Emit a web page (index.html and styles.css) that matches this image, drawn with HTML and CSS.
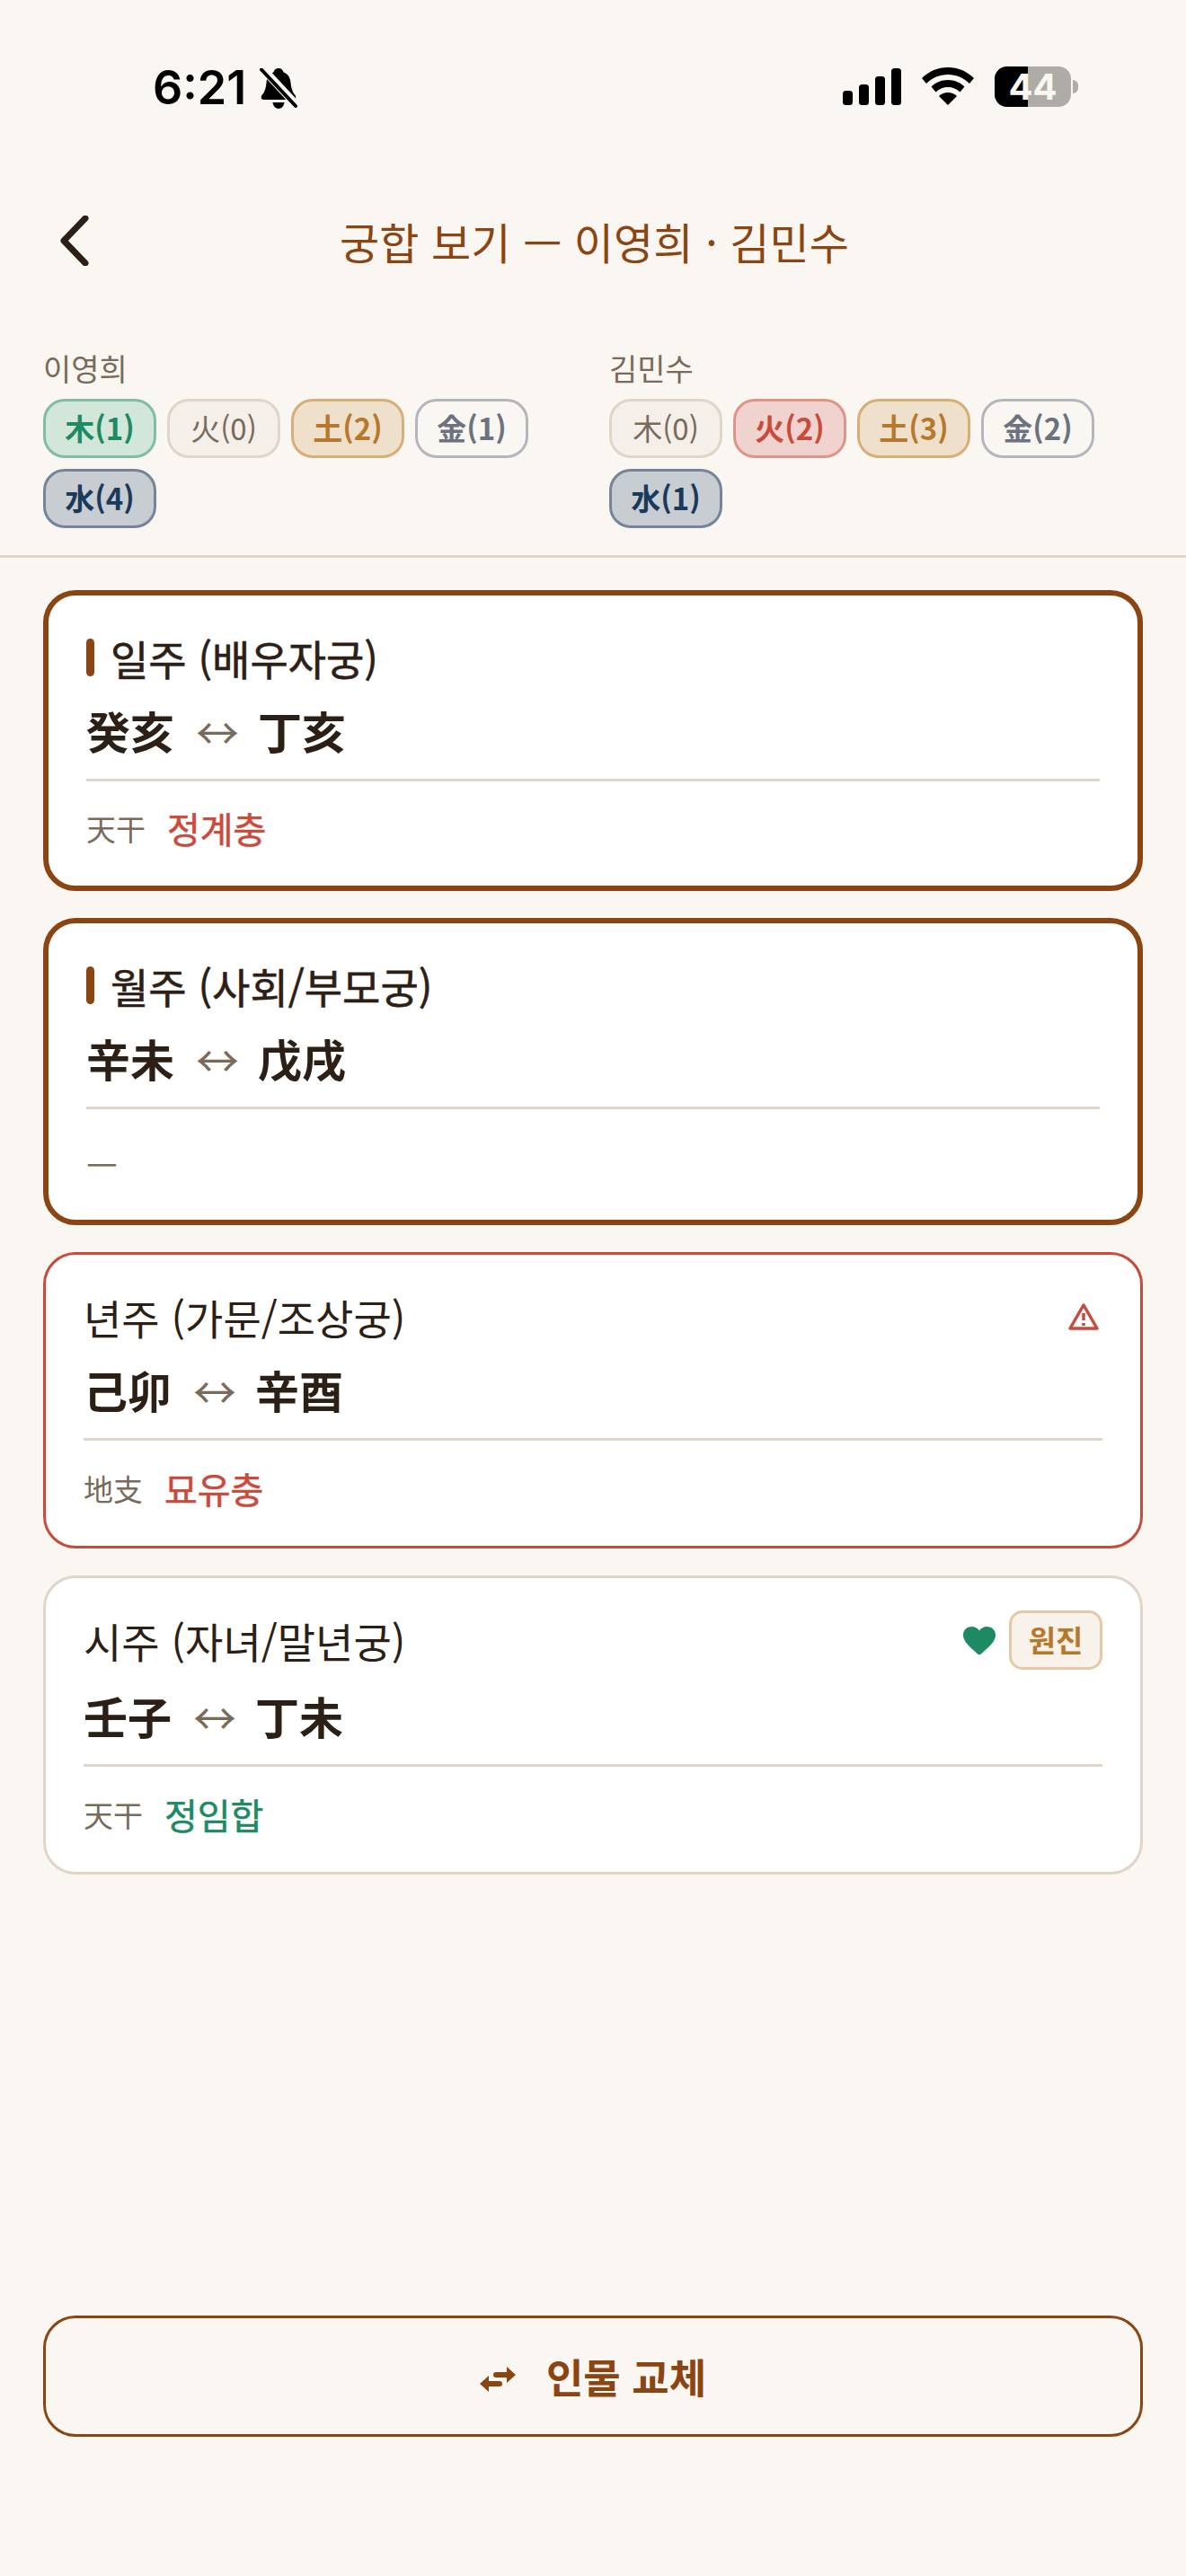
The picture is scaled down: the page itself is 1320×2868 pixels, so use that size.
FILE: index.html
```html
<!DOCTYPE html>
<html lang="ko">
<head>
    <meta charset="UTF-8">
    <meta name="viewport" content="width=device-width, initial-scale=1.0">
    <title>궁합 보기</title>
    <link rel="stylesheet" href="styles.css">
</head>
<body>
    <div class="page">
        <div class="status-bar">
            <div class="status-left">
                <span class="clock">6:21</span>
                <svg class="bell" viewBox="0 0 42 45">
                    <path d="M21 0c3 0 5 2 5.600 4.500 5 1.800 7.400 6 7.900 11.500.5 5.500 1.500 10 5 14 1.500 2 .8 5-2 5H4.500c-2.800 0-3.500-3-2-5 3.500-4 4.500-8.500 5-14 .5-5.500 2.900-9.700 7.900-11.500C16 2 18 0 21 0z"/>
                    <path d="M14.500 38h13c-.5 4-3 7-6.500 7s-6-3-6.500-7z"/>
                    <path class="bell-gap" d="M0 -3L42 42"/>
                    <path class="bell-slash" d="M2 1.500L40 42"/>
                </svg>
            </div>
            <div class="status-right">
                <svg class="signal" viewBox="0 0 65 41">
                    <rect x="0" y="25" width="11" height="16" rx="3.500"/>
                    <rect x="18" y="18" width="11" height="23" rx="3.500"/>
                    <rect x="36" y="9" width="11" height="32" rx="3.500"/>
                    <rect x="54" y="0" width="11" height="41" rx="3.500"/>
                </svg>
                <svg class="wifi" viewBox="0 0 58 42">
                    <path d="M29 0c11 0 21 4.300 29 12l-5 6C46.500 11.500 38 8 29 8S11.500 11.500 5 18l-5-6C8 4.300 18 0 29 0z"/>
                    <path d="M29 14c7 0 13.500 2.700 18.500 7.500l-5 6C39 24 34 22 29 22s-10 2-13.500 5.500l-5-6C15.500 16.700 22 14 29 14z"/>
                    <path d="M29 28c3.800 0 7.300 1.400 10 4L29 42 19 32c2.700-2.600 6.200-4 10-4z"/>
                </svg>
                <div class="battery">
                    <div class="battery-body">
                        <div class="battery-level"></div>
                        <span class="battery-num">44</span>
                    </div>
                    <div class="battery-nub"></div>
                </div>
            </div>
        </div>

        <div class="nav">
            <svg class="back" viewBox="0 0 32 56">
                <path d="M28 3L4 28l24 25"/>
            </svg>
            <h1 class="nav-title">궁합 보기 — 이영희 · 김민수</h1>
        </div>

        <div class="summary">
            <div class="person">
                <div class="person-name">이영희</div>
                <div class="pills">
                    <span class="pill wood">木(1)</span>
                    <span class="pill none">火(0)</span>
                    <span class="pill earth">土(2)</span>
                    <span class="pill metal">金(1)</span>
                    <span class="pill water">水(4)</span>
                </div>
            </div>
            <div class="person">
                <div class="person-name">김민수</div>
                <div class="pills">
                    <span class="pill none">木(0)</span>
                    <span class="pill fire">火(2)</span>
                    <span class="pill earth">土(3)</span>
                    <span class="pill metal">金(2)</span>
                    <span class="pill water">水(1)</span>
                </div>
            </div>
        </div>

        <div class="cards">
            <div class="card card-active">
                <div class="card-head">
                    <div class="card-title"><span class="stripe"></span>일주 (배우자궁)</div>
                </div>
                <div class="stems"><span>癸亥</span><span class="arrow">↔</span><span>丁亥</span></div>
                <div class="card-foot">
                    <span class="foot-label">天干</span>
                    <span class="foot-value red">정계충</span>
                </div>
            </div>

            <div class="card card-active">
                <div class="card-head">
                    <div class="card-title"><span class="stripe"></span>월주 (사회/부모궁)</div>
                </div>
                <div class="stems"><span>辛未</span><span class="arrow">↔</span><span>戊戌</span></div>
                <div class="card-foot card-foot-empty">
                    <span class="foot-dash">—</span>
                </div>
            </div>

            <div class="card card-clash">
                <div class="card-head">
                    <div class="card-title">년주 (가문/조상궁)</div>
                    <svg class="warn" viewBox="0 0 34 30">
                        <path d="M17 2L32 28H2z"/>
                        <path d="M17 11v8M17 22v3"/>
                    </svg>
                </div>
                <div class="stems"><span>己卯</span><span class="arrow">↔</span><span>辛酉</span></div>
                <div class="card-foot">
                    <span class="foot-label">地支</span>
                    <span class="foot-value red">묘유충</span>
                </div>
            </div>

            <div class="card card-match">
                <div class="card-head">
                    <div class="card-title">시주 (자녀/말년궁)</div>
                    <div class="card-marks">
                        <svg class="heart" viewBox="0 0 36 31">
                            <path d="M18 31c-1 0-2-.6-3-1.600C8 23 0 17 0 9.500 0 4 4 0 9.500 0c3.400 0 6.600 1.700 8.500 4.500C19.900 1.700 23.100 0 26.500 0 32 0 36 4 36 9.500c0 7.500-8 13.500-15 19.900-1 1-2 1.600-3 1.600z"/>
                        </svg>
                        <span class="chip">원진</span>
                    </div>
                </div>
                <div class="stems"><span>壬子</span><span class="arrow">↔</span><span>丁未</span></div>
                <div class="card-foot">
                    <span class="foot-label">天干</span>
                    <span class="foot-value green">정임합</span>
                </div>
            </div>
        </div>

        <div class="bottom">
            <button class="swap-btn" type="button">
                <svg class="swap-icon" viewBox="0 0 40 28">
                    <path d="M30 0l10 9-10 9v-6H18a3 3 0 0 1 0-6h12z"/>
                    <path d="M10 10L0 19l10 9v-6h12a3 3 0 0 0 0-6H10z"/>
                </svg>
                <span>인물 교체</span>
            </button>
        </div>
    </div>
</body>
</html>
```

FILE: styles.css
```css
* { box-sizing: border-box; }
html, body { margin: 0; padding: 0; }
body {
    background-color: #FAF7F2;
    color: #2C2016;
    font-family: "Noto Sans CJK KR", "Noto Sans", sans-serif;
}
.page { height: 2868px; display: flex; flex-direction: column; overflow: hidden; }

/* Status bar */
.status-bar {
    height: 132px;
    padding: 72px 120px 0 170px;
    display: flex;
    justify-content: space-between;
    align-items: flex-start;
}
.status-left { display: flex; align-items: center; gap: 15px; }
.clock { font-family: Inter, sans-serif; font-size: 52px; font-weight: 600; line-height: 52px; color: #000; }
.bell { width: 42px; height: 45px; }
.bell path { fill: #000; }
.bell .bell-gap { fill: none; stroke: #FAF7F2; stroke-width: 9px; }
.bell .bell-slash { fill: none; stroke: #000; stroke-width: 4px; stroke-linecap: round; }
.status-right { display: flex; align-items: flex-start; }
.signal { width: 65px; height: 41px; margin-top: 4px; fill: #000; }
.wifi { width: 58px; height: 42px; margin: 3px 23px 0 23px; fill: #000; }
.battery { display: flex; align-items: center; gap: 2px; margin-top: 2px; }
.battery-body { position: relative; width: 85px; height: 45px; border-radius: 14px; background-color: #AFABA7; }
.battery-level { width: 37px; height: 45px; background-color: #000; border-radius: 14px 0 0 14px; }
.battery-num {
    position: absolute;
    top: 0;
    left: 0;
    right: 0;
    text-align: center;
    font-family: Inter, sans-serif;
    font-size: 40px;
    font-weight: 700;
    line-height: 45px;
    color: #FAF7F2;
}
.battery-nub { width: 6px; height: 15px; background-color: #AFABA7; border-radius: 0 6px 6px 0; }

/* Nav */
.nav { position: relative; height: 150px; margin-top: 61px; padding-left: 3px; display: flex; justify-content: center; align-items: center; }
.back { position: absolute; left: 67px; top: 47px; width: 32px; height: 56px; fill: none; stroke: #2C2016; stroke-width: 7px; stroke-linecap: round; stroke-linejoin: round; }
.nav-title { margin: 0; font-size: 48px; font-weight: 400; letter-spacing: 0.1px; color: #8B4513; line-height: 66px; }

/* Five element summary */
.summary {
    display: grid;
    grid-template-columns: 1fr 1fr;
    gap: 36px;
    padding: 41px 48px 30px;
    border-bottom: 3px solid #E0D5C8;
}
.person-name { font-size: 34px; line-height: 48px; color: #7A6A5A; margin-bottom: 10px; padding-top: 2px; }
.pills { display: flex; flex-wrap: wrap; gap: 12px; }
.pill {
    width: 126px;
    height: 66px;
    border: 3px solid;
    border-radius: 24px;
    font-size: 33px;
    font-weight: 700;
    line-height: 58px;
    text-align: center;
}
.wood { background-color: #D2E6DA; border-color: #80BEA3; color: #1E8A63; }
.fire { background-color: #F0D3CE; border-color: #E09488; color: #C84B3C; }
.earth { background-color: #EFE0CC; border-color: #D8AE78; color: #B8782C; }
.metal { background-color: #FAF7F2; border-color: #B4B6BC; color: #6B7280; }
.water { background-color: #C8CDD2; border-color: #748599; color: #1A3A5C; }
.none { background-color: #F4EFE9; border-color: #E0D5C8; color: #7A6A5A; font-weight: 400; }

/* Pillar cards */
.cards { display: flex; flex-direction: column; gap: 30px; padding: 36px 48px 0; }
.card { background-color: #fff; border: 3px solid #E0D5C8; border-radius: 36px; padding: 36px 42px 37px; }
.card-active { border: 6px solid #8B4513; }
.card-clash { border-color: #C84B3C; }
.card-head { display: flex; justify-content: space-between; align-items: center; height: 66px; }
.card-title { display: flex; align-items: center; font-size: 46px; line-height: 66px; }
.card-active .card-title { -webkit-text-stroke: 0.6px #2C2016; }
.stripe { width: 9px; height: 42px; border-radius: 5px; background-color: #8B4513; margin-right: 18px; }
.stems { display: flex; align-items: center; font-size: 49px; font-weight: 700; line-height: 66px; margin-top: 15px; padding-bottom: 21px; border-bottom: 3px solid #E0D5C8; }
.card-match .stems { margin-top: 18px; }
.arrow { width: 40px; margin: 0 29px 0 24px; font-size: 48px; font-weight: 400; color: #7A6A5A; }
.card-foot { display: flex; align-items: center; gap: 24px; height: 54px; margin-top: 26px; }
.card-active .card-foot { margin-top: 25px; }
.card-active .card-foot-empty { height: 60px; margin-top: 26px; }
.foot-label { font-size: 33px; color: #7A6A5A; }
.foot-dash { font-size: 39px; color: #7A6A5A; }
.foot-value { font-size: 40px; -webkit-text-stroke: 0.6px; }
.red { color: #C84B3C; }
.green { color: #1E8A63; }
.warn { width: 34px; height: 30px; margin-right: 4px; fill: none; stroke: #C84B3C; stroke-width: 3.500px; stroke-linejoin: round; }
.card-marks { display: flex; align-items: center; gap: 15px; }
.heart { width: 36px; height: 31px; fill: #1E8A63; }
.chip { width: 104px; height: 66px; border: 3px solid #E3C9A5; border-radius: 15px; background-color: #F8F2EA; color: #B8782C; font-size: 33px; font-weight: 700; line-height: 58px; text-align: center; }

/* Bottom button */
.bottom { margin-top: auto; padding: 0 48px 155px; }
.swap-btn {
    width: 100%;
    height: 135px;
    display: flex;
    justify-content: center;
    align-items: center;
    gap: 34px;
    background: none;
    border: 3px solid #8B4513;
    border-radius: 36px;
    color: #8B4513;
    font-family: inherit;
    font-size: 45px;
    font-weight: 700;
}
.swap-icon { width: 40px; height: 28px; margin-top: 6px; fill: #8B4513; }
```
